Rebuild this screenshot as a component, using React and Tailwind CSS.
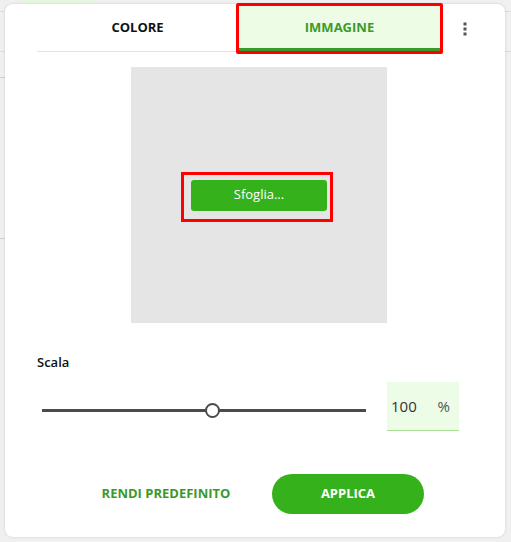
import React from "react";

function Kebab() {
  return (
    <svg width="4" height="14" viewBox="0 0 4 14" className="block">
      <rect x="0.5" y="0.5" width="3" height="3" fill="#555" />
      <rect x="0.5" y="5.5" width="3" height="3" fill="#555" />
      <rect x="0.5" y="10.5" width="3" height="3" fill="#555" />
    </svg>
  );
}

export default function App() {
  const font = { fontFamily: '"Open Sans", "Noto Sans", sans-serif' };
  return (
    <div className="relative w-[511px] h-[542px] overflow-hidden bg-[#f0f0f0]" style={font}>
      {/* backdrop */}
      <div className="absolute left-[15px] top-[-20px] w-[85px] h-[23px] rounded-full bg-[#e6f7df]" />
      <div className="absolute left-0 top-[11px] w-full h-px bg-[#dcdcdc]" />
      <div className="absolute left-0 top-[51px] w-full h-px bg-[#dcdcdc]" />
      <div className="absolute left-0 top-[77px] w-[10px] h-px bg-[#d0d0d0]" />
      <div className="absolute left-0 top-[238px] w-[10px] h-px bg-[#d0d0d0]" />

      {/* card */}
      <div className="relative z-10 ml-[5px] mt-[4px] w-[500px] h-[533px] bg-white rounded-[8px] shadow-[0_0_3px_rgba(0,0,0,0.14)] flex flex-col">
        {/* tabs */}
        <div className="flex items-stretch h-[48px]">
          <div className="ml-[32px] flex w-[404px] border-b border-[#e2e2e2]">
            <div className="w-[201px] flex items-center justify-center text-[13px] font-bold text-[#111] pt-[1px]">
              COLORE
            </div>
            <div className="relative w-[203px] flex items-center justify-center text-[13px] font-bold text-[#3b9a2c] bg-[#edfce4] border-b-[3px] border-[#3a9a28] mt-[2px] pt-[2px]">
              IMMAGINE
              <div className="absolute left-[-2px] right-[-2px] top-[-3px] bottom-[-6px] border-[3px] border-[#ff0000] rounded-[2px]" />
            </div>
          </div>
          <div className="flex-1 flex items-start justify-center pr-[17px] pt-[18px]">
            <Kebab />
          </div>
        </div>

        {/* image area */}
        <div className="ml-[126px] mt-[15px] w-[256px] h-[256px] bg-[#e5e5e5] flex items-center justify-center">
          <div className="relative">
            <button className="w-[136px] h-[31px] rounded-[3px] bg-[#35b11c] text-white text-[13px] flex items-center justify-center">
              Sfoglia...
            </button>
            <div className="absolute left-[-10px] right-[-6px] top-[-8px] bottom-[-11px] border-[3px] border-[#ff0000]" />
          </div>
        </div>

        {/* scala */}
        <div className="ml-[32px] mt-[30px] text-[13px] font-semibold text-[#111] leading-[18px]">Scala</div>
        <div className="flex items-center mt-[11px] h-[49px]">
          <div className="relative ml-[37px] mt-[7px] w-[324px] h-[3px] bg-[#4b4b4b]">
            <div className="absolute left-[163px] top-[-6px] w-[15px] h-[15px] rounded-full bg-white border-[2px] border-[#4b4b4b]" />
          </div>
          <div className="ml-[21px] w-[72px] h-[49px] bg-[#edfce6] border-b border-[#a8e096] flex items-center justify-between pl-[4px] pr-[9px] text-[15px] text-[#333]">
            <span>100</span>
            <span className="text-[#555]">%</span>
          </div>
        </div>

        {/* buttons */}
        <div className="flex items-center mt-[43px]">
          <div className="ml-[96px] w-[130px] text-center text-[13px] font-bold text-[#3a9a28]">RENDI PREDEFINITO</div>
          <button className="ml-[41px] w-[152px] h-[40px] rounded-full bg-[#35b11c] text-white text-[13px] font-bold">
            APPLICA
          </button>
        </div>
      </div>
    </div>
  );
}
